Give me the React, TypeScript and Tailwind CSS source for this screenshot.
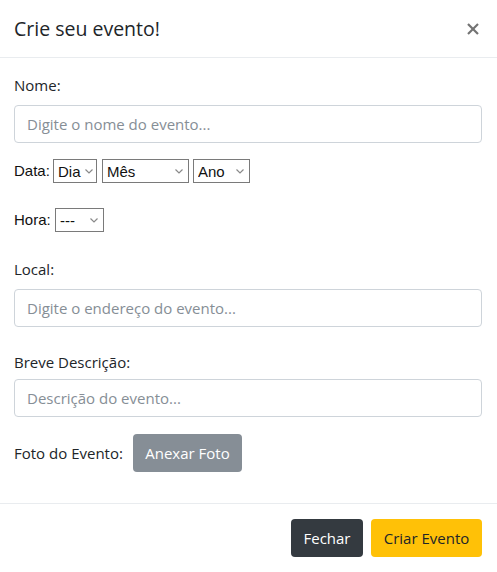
import React from 'react';

const selectFont = { fontFamily: '"Liberation Sans", Arial, sans-serif' };

function Chevron() {
    return (
        <svg width="8" height="5" viewBox="0 0 8 5" fill="none" stroke="#8a8a8a" strokeWidth="1.2">
            <polyline points="0.5,0.5 4,4 7.5,0.5" />
        </svg>
    );
}

function FakeSelect({ label, width, chevronRight = 6 }: { label: string; width: number; chevronRight?: number }) {
    return (
        <div className="relative h-[24px] shrink-0" style={{ width }}>
            <select className="h-full w-full appearance-none rounded-none border border-[#7a7a7a] bg-white pl-[4px] pt-[1px] text-[15px] text-[#111] outline-none" style={selectFont}>
                <option>{label}</option>
            </select>
            <span className="pointer-events-none absolute top-[10px] flex" style={{ right: chevronRight }}>
                <Chevron />
            </span>
        </div>
    );
}

function TextInput({ placeholder }: { placeholder: string }) {
    return (
        <input
            type="text"
            placeholder={placeholder}
            className="block h-[38px] w-full rounded-[4px] border border-[#ced4da] bg-white px-[12px] text-[15px] text-[#495057] outline-none placeholder:text-[#868e96]"
        />
    );
}

export default function App() {
    return (
        <div className="flex h-[572px] w-[497px] flex-col bg-white text-[15px] text-[#212529]" style={{ fontFamily: '"Open Sans", sans-serif' }}>
            {/* header */}
            <div className="flex h-[58px] shrink-0 items-center justify-between border-b border-[#e9ecef] pl-[14px] pr-[18px]">
                <h5 className="pt-[1px] text-[19.5px] font-medium leading-6 text-[#212529]">Crie seu evento!</h5>
                <button className="flex items-center justify-center">
                    <svg width="12" height="12" viewBox="0 0 12 12" stroke="#737373" strokeWidth="2.2">
                        <line x1="1" y1="1" x2="11" y2="11" />
                        <line x1="11" y1="1" x2="1" y2="11" />
                    </svg>
                </button>
            </div>

            {/* body */}
            <div className="flex h-[445px] shrink-0 flex-col pl-[14px] pr-[15px] pt-[15px]">
                <label className="leading-6">Nome:</label>
                <div className="mt-[8px]">
                    <TextInput placeholder="Digite o nome do evento..." />
                </div>

                <div className="mt-[16px] flex h-[24px] items-center" style={selectFont}>
                    <span className="w-[39px] pt-[1px] text-[15px] text-[#111]">Data:</span>
                    <FakeSelect label="Dia" width={44} chevronRight={4} />
                    <div className="w-[5px]" />
                    <FakeSelect label="Mês" width={87} />
                    <div className="w-[4px]" />
                    <FakeSelect label="Ano" width={57} />
                </div>

                <div className="mt-[25px] flex h-[24px] items-center" style={selectFont}>
                    <span className="w-[41px] pt-[1px] text-[15px] text-[#111]">Hora:</span>
                    <FakeSelect label="---" width={49} />
                </div>

                <label className="mt-[25px] leading-6">Local:</label>
                <div className="mt-[8px]">
                    <TextInput placeholder="Digite o endereço do evento..." />
                </div>

                <label className="mt-[23px] leading-6">Breve Descrição:</label>
                <div className="mt-[5px]">
                    <TextInput placeholder="Descrição do evento..." />
                </div>

                <div className="mt-[17px] flex h-[38px] items-center">
                    <span className="w-[119px]">Foto do Evento:</span>
                    <button className="h-[38px] w-[109px] rounded-[4px] bg-[#868e96] text-white">Anexar Foto</button>
                </div>
            </div>

            {/* footer */}
            <div className="flex justify-end gap-[8px] border-t border-[#e9ecef] pl-[14px] pr-[15px] pt-[15px]">
                <button className="h-[38px] w-[72px] rounded-[4px] bg-[#343a40] text-white">Fechar</button>
                <button className="h-[38px] w-[111px] rounded-[4px] bg-[#ffc107] text-[#212529]">Criar Evento</button>
            </div>
        </div>
    );
}
